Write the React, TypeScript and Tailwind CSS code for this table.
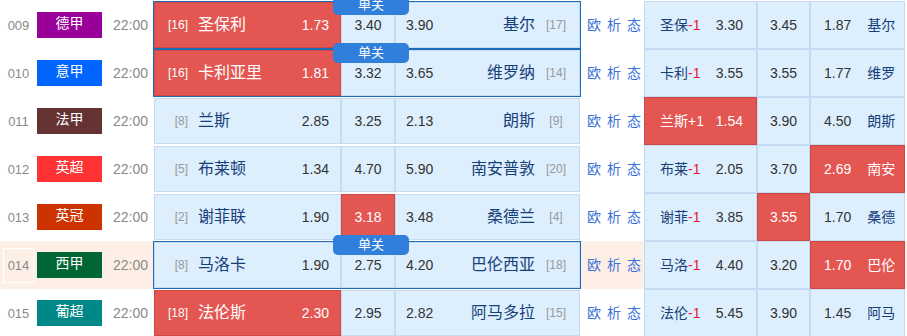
import clsx from 'clsx'

interface Match {
  no: string
  league: string
  leagueBg: string
  homeRank: string
  home: string
  h: string
  d: string
  a: string
  away: string
  awayRank: string
  red1?: 'h' | 'd' | 'a'
  single?: boolean
  hover?: boolean
  hShort: string
  hcp: string
  o1: string
  o2: string
  o3: string
  aShort: string
  red2?: 1 | 2 | 3
}

const matches: Match[] = [
  { no: '009', league: '德甲', leagueBg: 'bg-[#990099]', homeRank: '[16]', home: '圣保利', h: '1.73', d: '3.40', a: '3.90', away: '基尔', awayRank: '[17]', red1: 'h', single: true, hShort: '圣保', hcp: '-1', o1: '3.30', o2: '3.45', o3: '1.87', aShort: '基尔' },
  { no: '010', league: '意甲', leagueBg: 'bg-[#0066ff]', homeRank: '[16]', home: '卡利亚里', h: '1.81', d: '3.32', a: '3.65', away: '维罗纳', awayRank: '[14]', red1: 'h', single: true, hShort: '卡利', hcp: '-1', o1: '3.55', o2: '3.55', o3: '1.77', aShort: '维罗' },
  { no: '011', league: '法甲', leagueBg: 'bg-[#663333]', homeRank: '[8]', home: '兰斯', h: '2.85', d: '3.25', a: '2.13', away: '朗斯', awayRank: '[9]', hShort: '兰斯', hcp: '+1', o1: '1.54', o2: '3.90', o3: '4.50', aShort: '朗斯', red2: 1 },
  { no: '012', league: '英超', leagueBg: 'bg-[#ff3333]', homeRank: '[5]', home: '布莱顿', h: '1.34', d: '4.70', a: '5.90', away: '南安普敦', awayRank: '[20]', hShort: '布莱', hcp: '-1', o1: '2.05', o2: '3.70', o3: '2.69', aShort: '南安', red2: 3 },
  { no: '013', league: '英冠', leagueBg: 'bg-[#cc3300]', homeRank: '[2]', home: '谢菲联', h: '1.90', d: '3.18', a: '3.48', away: '桑德兰', awayRank: '[4]', red1: 'd', hShort: '谢菲', hcp: '-1', o1: '3.85', o2: '3.55', o3: '1.70', aShort: '桑德', red2: 2 },
  { no: '014', league: '西甲', leagueBg: 'bg-[#006633]', homeRank: '[8]', home: '马洛卡', h: '1.90', d: '2.75', a: '4.20', away: '巴伦西亚', awayRank: '[18]', single: true, hover: true, hShort: '马洛', hcp: '-1', o1: '4.40', o2: '3.20', o3: '1.70', aShort: '巴伦', red2: 3 },
  { no: '015', league: '葡超', leagueBg: 'bg-[#008888]', homeRank: '[18]', home: '法伦斯', h: '2.30', d: '2.95', a: '2.82', away: '阿马多拉', awayRank: '[15]', red1: 'h', hShort: '法伦', hcp: '-1', o1: '5.45', o2: '3.90', o3: '1.45', aShort: '阿马' },
]

function cellClass(red: boolean) {
  return clsx(
    'h-full flex items-center border',
    red ? 'bg-[#e45652] border-[#cf4845] text-white' : 'bg-[#ddeefd] border-[#c4dbf3] text-[#333]'
  )
}

function MatchRow({ m }: { m: Match }) {
  const rankColor = (red: boolean) => (red ? 'text-white' : 'text-[#999]')
  const nameColor = (red: boolean) => (red ? 'text-white' : 'text-[#173f7a]')

  return (
    <div className={clsx('flex h-[48px] items-center', m.hover && 'bg-[#fdefe6]')}>
      <div className="w-[37px] flex justify-center">
        <span className={clsx('text-[13px] text-[#8a8a8a] leading-[33px] px-[4px]', m.hover && 'border border-white')}>
          {m.no}
        </span>
      </div>
      <div className={clsx('w-[65px] h-[26px] flex justify-center text-white text-[14px] leading-[22px]', m.leagueBg)}>
        {m.league}
      </div>
      <div className="w-[51px] pl-[11px] text-[14px] text-[#8a8a8a]">22:00</div>

      {/* 胜平负 */}
      <div
        className={clsx(
          'relative w-[428px] h-full flex border',
          m.single ? 'border-[#1d6db6]' : 'border-transparent'
        )}
      >
        {m.single && (
          <div className="absolute left-[179px] top-[-7px] w-[76px] h-[20px] rounded-[5px] bg-[#2f7fdb] text-white text-[13px] leading-[19px] text-center">
            单关
          </div>
        )}
        <div className={clsx(cellClass(m.red1 === 'h'), 'w-[187px]')}>
          <span className={clsx('w-[33px] text-right text-[12px]', rankColor(m.red1 === 'h'))}>{m.homeRank}</span>
          <span className={clsx('ml-[10px] text-[16px]', nameColor(m.red1 === 'h'))}>{m.home}</span>
          <span className="ml-auto pr-[11px] text-[14px]">{m.h}</span>
        </div>
        <div className={clsx(cellClass(m.red1 === 'd'), 'w-[54px] justify-center text-[14px]')}>{m.d}</div>
        <div className={clsx(cellClass(m.red1 === 'a'), 'flex-1')}>
          <span className="pl-[10px] text-[14px]">{m.a}</span>
          <span className={clsx('ml-auto text-[16px]', nameColor(m.red1 === 'a'))}>{m.away}</span>
          <span className={clsx('w-[32px] ml-[5px] mr-[7px] text-center text-[12px]', rankColor(m.red1 === 'a'))}>
            {m.awayRank}
          </span>
        </div>
      </div>

      <div className="w-[63px] h-full flex items-center gap-[6px] pl-[6px] text-[14px] text-[#3b72d9]">
        <span>欧</span>
        <span>析</span>
        <span>态</span>
      </div>

      {/* 让球 */}
      <div className="h-full flex bg-white">
        <div className={clsx(cellClass(m.red2 === 1), 'w-[113px] pl-[15px] pr-[13px] justify-between')}>
          <span className={clsx('text-[14px]', nameColor(m.red2 === 1))}>
            {m.hShort}
            <span className={m.red2 === 1 ? 'text-white' : 'text-[#e8153a]'}>{m.hcp}</span>
          </span>
          <span className="text-[14px]">{m.o1}</span>
        </div>
        <div className={clsx(cellClass(m.red2 === 2), 'w-[53px] justify-center text-[14px]')}>{m.o2}</div>
        <div className={clsx(cellClass(m.red2 === 3), 'w-[95px] pl-[13px] gap-[16px]')}>
          <span className="text-[14px]">{m.o3}</span>
          <span className={clsx('text-[14px]', nameColor(m.red2 === 3))}>{m.aShort}</span>
        </div>
      </div>
    </div>
  )
}

export default function App() {
  return (
    <div
      className="w-[907px] h-[336px] overflow-hidden bg-white pt-[1px]"
      style={{ fontFamily: '"Liberation Sans", "Noto Sans CJK SC", sans-serif' }}
    >
      {matches.map((m) => (
        <MatchRow key={m.no} m={m} />
      ))}
    </div>
  )
}
